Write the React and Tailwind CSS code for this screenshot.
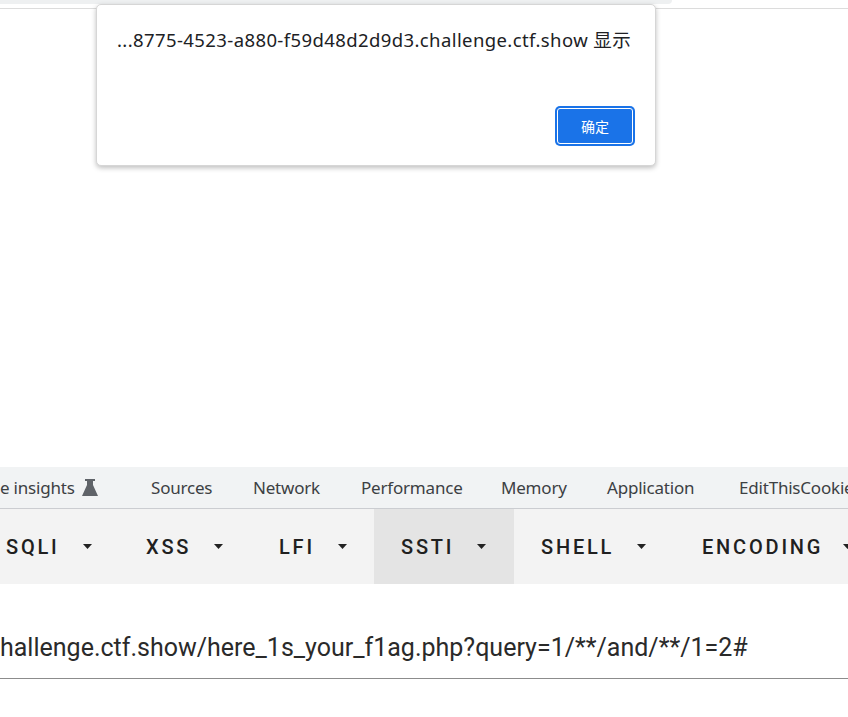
import React from "react";

function Caret() {
  return (
    <svg width="9" height="5" viewBox="0 0 9 5" className="shrink-0">
      <path d="M0 0 L9 0 L4.5 5 Z" fill="#222" />
    </svg>
  );
}

function Flask() {
  return (
    <svg width="16" height="17" viewBox="0 0 16 17">
      <path d="M3 0 H13 V2 H11 V6 L16 17 H0 L5 6 V2 H3 Z" fill="#5f6368" />
    </svg>
  );
}

export default function App() {
  const hack = [
    { t: "SQLI", w: "w-[120px]", pl: "pl-[6px]", gap: "gap-[23px]" },
    { t: "XSS", w: "w-[133px]", pl: "pl-[26px]", gap: "gap-[23px]" },
    { t: "LFI", w: "w-[121px]", pl: "pl-[26px]", gap: "gap-[23px]" },
    { t: "SSTI", w: "w-[140px]", pl: "pl-[27px]", gap: "gap-[23px]", active: true },
    { t: "SHELL", w: "w-[161px]", pl: "pl-[27px]", gap: "gap-[23px]" },
    { t: "ENCODING", w: "w-[180px]", pl: "pl-[27px]", gap: "gap-[20px]" },
  ];
  return (
    <div className="relative w-[848px] h-[717px] overflow-hidden bg-white">
      {/* browser top strip */}
      <div className="absolute left-0 top-0 w-[672px] h-[4px] bg-[#eef0f1] rounded-br-[6px]" />
      <div className="absolute left-0 top-[8px] w-[848px] h-px bg-[#dcdcdc]" />

      {/* alert dialog */}
      <div className="absolute left-[96px] top-[4px] w-[560px] h-[162px] bg-white rounded-[5px] border border-[#d6d6d6] shadow-[0_2px_5px_rgba(0,0,0,0.25)] flex flex-col">
        <div className="pl-[20px] pt-[21px] text-[18.5px] leading-[28px] text-[#202124] font-['Noto_Sans','Noto_Sans_CJK_SC',sans-serif] tracking-[0.4px] whitespace-nowrap">
          ...8775-4523-a880-f59d48d2d9d3.challenge.ctf.show 显示
        </div>
        <div className="flex-1" />
        <div className="flex justify-end pr-[20px] pb-[19px]">
          <div className="w-[80px] h-[40px] rounded-[5px] bg-[#1a73e8] p-[2px]">
            <div className="w-full h-full rounded-[3px] border border-white flex items-center justify-center text-white text-[14px] font-['Noto_Sans_CJK_SC',sans-serif]">
              确定
            </div>
          </div>
        </div>
      </div>

      {/* devtools tabs */}
      <div className="absolute left-0 top-[467px] w-[848px] h-[42px] bg-[#f1f3f4] border-b border-[#cbcdd1] flex items-center text-[17px] text-[#3c4043] font-['Noto_Sans',sans-serif] whitespace-nowrap tracking-[-0.2px]">
        <div className="flex items-center gap-[7px] shrink-0 w-[151px]">
          <span>e insights</span>
          <Flask />
        </div>
        <span className="shrink-0 w-[102px]">Sources</span>
        <span className="shrink-0 w-[108px]">Network</span>
        <span className="shrink-0 w-[140px]">Performance</span>
        <span className="shrink-0 w-[106px]">Memory</span>
        <span className="shrink-0 w-[132px]">Application</span>
        <span className="shrink-0">EditThisCookie</span>
      </div>

      {/* hackbar menu */}
      <div className="absolute left-0 top-[509px] w-[848px] h-[75px] bg-[#f3f3f3] flex items-stretch whitespace-nowrap font-['Roboto',sans-serif] font-medium text-[20px] tracking-[2.8px] text-[#202020]">
        {hack.map((h) => (
          <div
            key={h.t}
            className={`${h.w} ${h.pl} shrink-0 flex items-center ${h.gap} ${h.active ? "bg-[#e4e4e4]" : ""}`}
          >
            <span>{h.t}</span>
            <Caret />
          </div>
        ))}
      </div>

      {/* url input */}
      <div className="absolute left-0 top-[628px] w-[848px] h-[51px] border-b border-[#8c8c8c] whitespace-nowrap font-['Roboto',sans-serif] text-[25px] text-[#2a2a2a] leading-[40px]">
        hallenge.ctf.show/here_1s_your_f1ag.php?query=1/**/and/**/1=2#
      </div>
    </div>
  );
}
